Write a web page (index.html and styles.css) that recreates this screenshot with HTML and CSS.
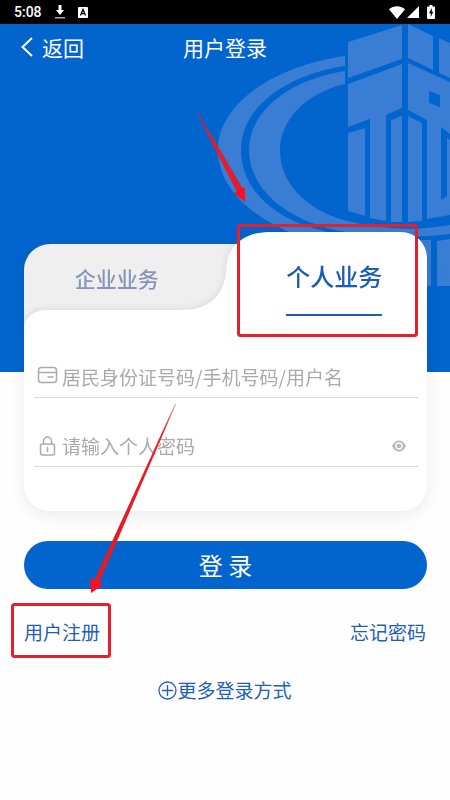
FILE: index.html
```html
<!DOCTYPE html>
<html lang="zh-CN">
<head>
    <meta charset="UTF-8">
    <meta name="viewport" content="width=device-width, initial-scale=1.0">
    <title>用户登录</title>
    <link rel="stylesheet" href="styles.css">
</head>
<body>
    <header class="status-bar">
        <span class="time">5:08</span>
        <svg class="status-icon" width="12" height="14" viewBox="0 0 12 14">
            <path d="M4.5 0h3v5H10L6 10 2 5h2.5z" fill="#fff"/>
            <path d="M1 12h10v1.5H1z" fill="#aaa"/>
        </svg>
        <svg class="status-icon" width="10" height="11" viewBox="0 0 10 11">
            <rect width="10" height="11" rx="1" fill="#fff"/>
            <path d="M2.5 8.5 5 2.5l2.5 6M3.5 6.6h3" fill="none" stroke="#000" stroke-width="1.3"/>
        </svg>
        <div class="status-right">
            <svg width="16" height="13" viewBox="0 0 16 13"><path d="M0 3.2C4.5-.8 11.5-.8 16 3.2L8 13z" fill="#fff"/></svg>
            <svg width="12" height="12" viewBox="0 0 12 12"><path d="M12 0v12H0z" fill="#fff"/></svg>
            <svg class="battery" width="8" height="14" viewBox="0 0 8 14">
                <path d="M2.5 0h3v1.5H7a1 1 0 0 1 1 1V13a1 1 0 0 1-1 1H1a1 1 0 0 1-1-1V2.5a1 1 0 0 1 1-1h1.5z" fill="#fff"/>
                <path d="M4.8 3 2 8.3h1.7V12L6.3 6.8H4.8z" fill="#000"/>
            </svg>
        </div>
    </header>

    <main class="page">
        <svg class="watermark" width="250" height="262" viewBox="200 24 250 262">
            <path d="M345 56C275 66 218 103 218 150C218 193 262 228 325 244L345 236C330 233 320 230 310 227C268 214 241 185 241 150C241 108 285 75 345 66z"/>
            <path d="M345 71C288 80 249 112 249 150C249 188 285 220 340 231C378 238 415 238 450 234V225C414 231 378 230 340 219C304 207 280 182 280 150C280 122 303 94 345 84z"/>
            <path d="M348 42 402 25V59L348 78zM408 24 433 36V70L408 58zM439 38 450 43V78L439 73z"/>
            <path d="M348 84 402 64V108L386 115V221L370 218V119L348 127z"/>
            <path d="M348 133 365 128V216L348 211zM391 120 402 116V222H391zM408 116 422 123V221L408 222z"/>
            <path fill-rule="evenodd" d="M408 63 450 82V134L441 127V200L447 196V138L450 140V215L427 219V120L408 110zM429 91V103L440 107V95z"/>
            <path d="M418 240 431 240V291H418zM437 241 450 239V291H437z"/>
        </svg>

        <nav class="nav-bar">
            <a class="back" href="#">
                <svg width="12" height="20" viewBox="0 0 12 20"><path d="M11 1 1.5 10 11 19" fill="none" stroke="#fff" stroke-width="2"/></svg>
                返回
            </a>
            <h1>用户登录</h1>
        </nav>

        <form class="login-form">
            <div class="card">
                <div class="tabs">
                    <svg class="tab-shape" viewBox="0 0 402 98" preserveAspectRatio="none">
                        <defs>
                            <filter id="tabShadow" x="-5%" y="-10%" width="110%" height="120%">
                                <feDropShadow dx="-1" dy="-1" stdDeviation="3" flood-color="#000" flood-opacity="0.09"/>
                            </filter>
                            <clipPath id="tabClip">
                                <path d="M0 98V38a26 26 0 0 1 26-26H211Q220 0 242 0H376a26 26 0 0 1 26 26V98z"/>
                            </clipPath>
                        </defs>
                        <g clip-path="url(#tabClip)">
                            <path d="M0 98V12H240V98z" fill="#efefef"/>
                            <path d="M0 98C0 86 9 78 24 78H158C188 78 201 60 202 36C203 14 220 0 244 0H402V98z" fill="#fff" filter="url(#tabShadow)"/>
                        </g>
                    </svg>
                    <button type="button" class="tab"><span>企业业务</span></button>
                    <button type="button" class="tab active"><span>个人业务</span></button>
                </div>
                <div class="fields">
                    <div class="field">
                        <label for="account" aria-label="账号">
                            <svg width="22" height="22" viewBox="0 0 22 22" fill="none" stroke="#aaa" stroke-width="1.5" stroke-linecap="round">
                                <rect x="1.5" y="1.5" width="18" height="15" rx="3"/>
                                <path d="M1.5 6.5h18M11 11h5"/>
                            </svg>
                        </label>
                        <input type="text" id="account" placeholder="居民身份证号码/手机号码/用户名">
                    </div>
                    <div class="field">
                        <label for="password" aria-label="密码">
                            <svg width="22" height="22" viewBox="0 0 22 22" fill="none" stroke="#aaa" stroke-width="1.5" stroke-linecap="round">
                                <rect x="3.5" y="9" width="14" height="11" rx="2"/>
                                <path d="M6.5 9V6a4 4 0 0 1 8 0v3M10.5 12.5v4"/>
                            </svg>
                        </label>
                        <input type="password" id="password" placeholder="请输入个人密码">
                        <button type="button" class="eye" aria-label="显示密码">
                            <svg width="14" height="12" viewBox="0 0 14 12">
                                <path d="M0 6C3-1.5 11-1.5 14 6C11 13.5 3 13.5 0 6z" fill="#b7bac0"/>
                                <circle cx="7" cy="6" r="3" fill="none" stroke="#fff" stroke-width="1.3"/>
                            </svg>
                        </button>
                    </div>
                </div>
            </div>

            <button type="submit" class="login-btn">登 录</button>
        </form>

        <div class="links">
            <a href="#">用户注册</a>
            <a href="#">忘记密码</a>
        </div>
        <a class="more" href="#">
            <svg width="19" height="19" viewBox="0 0 19 19" fill="none" stroke="#1f5fb8" stroke-width="1.3">
                <circle cx="9.5" cy="9.5" r="8.5"/>
                <path d="M9.5 4v11M4 9.5h11"/>
            </svg>
            更多登录方式
        </a>
    </main>

    <!-- guide marks over the page -->
    <svg class="marks" viewBox="0 0 450 800">
        <defs>
            <linearGradient id="fadeA" gradientUnits="userSpaceOnUse" x1="197" y1="113" x2="215" y2="146">
                <stop offset="0" stop-color="#e51c2b" stop-opacity="0.4"/>
                <stop offset="1" stop-color="#e51c2b"/>
            </linearGradient>
            <linearGradient id="fadeB" gradientUnits="userSpaceOnUse" x1="176" y1="404" x2="164" y2="431">
                <stop offset="0" stop-color="#e51c23" stop-opacity="0.5"/>
                <stop offset="1" stop-color="#e51c23"/>
            </linearGradient>
        </defs>
        <path d="M196 112 198 112 243 189 237 192z" fill="url(#fadeA)"/>
        <path d="M245 202 234 193 238 191 242 188 245 188z" fill="#fb1020"/>
        <path d="M175 404 176 404 99 583 94 581z" fill="url(#fadeB)"/>
        <path d="M91 593 90 578 95 580 99 582 103 585z" fill="#fb1020"/>
        <rect x="238.5" y="225.5" width="178" height="110" rx="2"/>
        <rect x="12.5" y="604.5" width="97" height="52" rx="2"/>
    </svg>
</body>
</html>
```
FILE: styles.css
```css
* {
    margin: 0;
    padding: 0;
    box-sizing: border-box;
}

body {
    position: relative;
    min-height: 100vh;
    background: #fefefe;
    font-family: "Noto Sans CJK SC", sans-serif;
    font-size: 19px;
    line-height: 28px;
}

a {
    color: #1f5fb8;
    text-decoration: none;
}

button,
input {
    border: none;
    background: none;
    font: inherit;
}

button {
    cursor: pointer;
}

svg {
    display: block;
    flex-shrink: 0;
}

.status-bar {
    display: flex;
    align-items: center;
    height: 24px;
    padding: 0 15px 0 14px;
    background: #000;
    color: #fff;
}

.time {
    font-family: Roboto, sans-serif;
    font-size: 14px;
    font-weight: 500;
}

.status-icon {
    margin-left: 12px;
}

.status-right {
    display: flex;
    align-items: center;
    gap: 2px;
    margin-left: auto;
}

.battery {
    margin-left: 6px;
}

.page {
    position: relative;
    background: linear-gradient(#0264cd, #0264cd) no-repeat 0 0 / 100% 348px;
}

.watermark {
    position: absolute;
    top: 0;
    right: 0;
    fill: #397dd4;
}

.nav-bar {
    position: relative;
    display: grid;
    grid-template-columns: 1fr auto 1fr;
    align-items: center;
    height: 46px;
    padding: 0 21px;
    color: #fff;
    font-size: 21px;
}

.nav-bar h1 {
    font-size: 21px;
    font-weight: 400;
}

.back {
    display: flex;
    align-items: center;
    gap: 9px;
    color: #fff;
}

.login-form {
    position: relative;
    padding: 162px 23px 0 24px;
}

.card {
    border-radius: 26px;
    background: linear-gradient(#fff, #fff) no-repeat 0 97px / 100% 100%;
    filter: drop-shadow(0 4px 8px rgba(0, 0, 0, 0.08));
}

.tabs {
    position: relative;
    display: flex;
    height: 79px;
}

.tab-shape {
    position: absolute;
    top: 0;
    left: 0;
    width: 100%;
    height: 98px;
}

.tab {
    position: relative;
    flex: 1;
    padding: 12px 16px 0 0;
    color: #8494bb;
    font-size: 21px;
    font-weight: 500;
}

.tab.active {
    padding: 12px 0 0 16px;
    color: #1a5cb8;
    font-size: 24px;
}

.tab span {
    display: inline-block;
}

.tab.active span {
    padding: 18px 0 24px;
    border-bottom: 2px solid #1a5cb8;
}

.fields {
    position: relative;
    display: flex;
    flex-direction: column;
    gap: 27px;
    padding: 45px 9px 44px 10px;
}

.field {
    display: flex;
    align-items: center;
    gap: 3px;
    height: 42px;
    padding: 0 12px 0 3px;
    border-bottom: 1px solid #ddd;
}

.field input {
    flex: 1;
    min-width: 0;
    height: 40px;
    color: #333;
    outline: none;
}

.field input::placeholder {
    color: #aaa;
    opacity: 1;
}

.login-btn {
    display: block;
    width: 100%;
    height: 48px;
    margin-top: 30px;
    border-radius: 24px;
    background: #0264cd;
    color: #fff;
    font-size: 24px;
}

.links {
    display: flex;
    justify-content: space-between;
    padding: 29px 24px 0;
}

.more {
    display: flex;
    align-items: center;
    justify-content: center;
    margin-top: 30px;
}

.marks {
    position: absolute;
    top: 0;
    left: 0;
    width: 100%;
    pointer-events: none;
}

.marks rect {
    fill: none;
    stroke: #e5202a;
    stroke-width: 3px;
}
```
